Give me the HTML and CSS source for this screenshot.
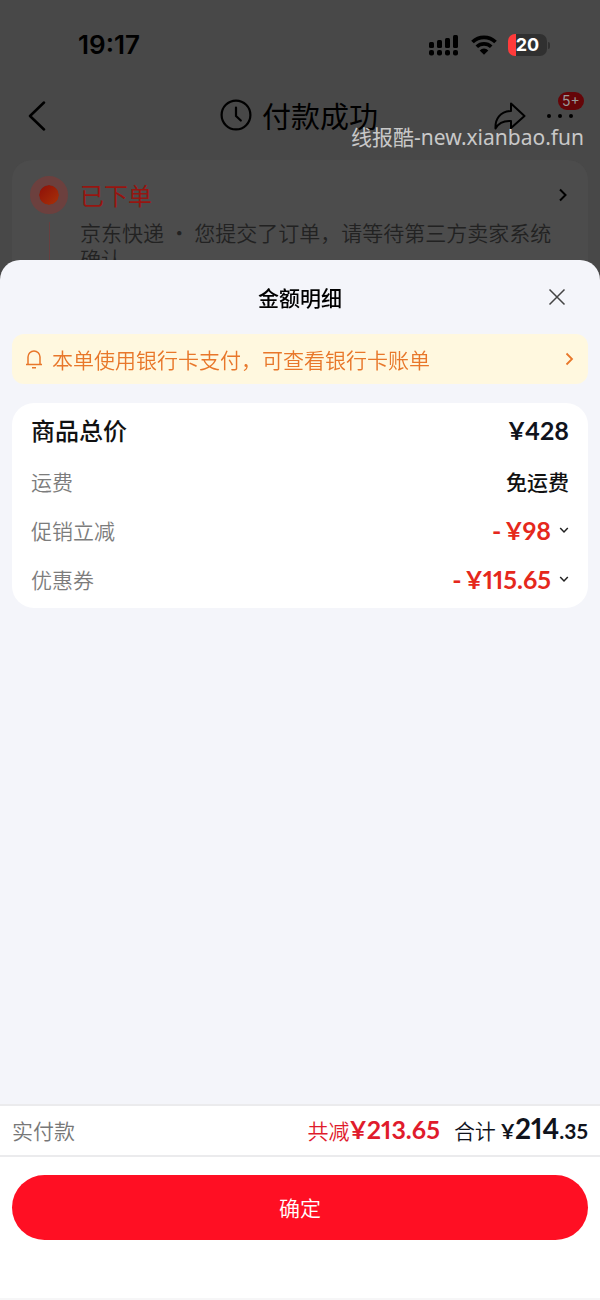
FILE: index.html
```html
<!DOCTYPE html>
<html lang="zh-CN">
<head>
<meta charset="utf-8">
<meta name="viewport" content="width=device-width, initial-scale=1">
<title>付款成功</title>
<link rel="stylesheet" href="styles.css">
</head>
<body>
<div class="page">
  <div class="status">
    <time class="status-time">19:17</time>
    <div class="status-icons">
      <svg width="32" height="22" viewBox="0 0 32 22" aria-hidden="true">
        <rect x="1" y="8" width="5" height="6" rx="1.500"/><rect x="9" y="6" width="5" height="8" rx="1.500"/><rect x="17" y="4" width="5" height="10" rx="1.500"/><rect x="25" y="1" width="5" height="13" rx="1.500"/>
        <rect x="1" y="16" width="5" height="5.500" rx="2"/><rect x="9" y="16" width="5" height="5.500" rx="2"/><rect x="17" y="16" width="5" height="5.500" rx="2"/><rect x="25" y="16" width="5" height="5.500" rx="2"/>
      </svg>
      <svg width="26" height="20" viewBox="0 0 26 20" aria-hidden="true">
        <path d="M1.500 7a16.500 16.500 0 0 1 23 0" fill="none" stroke="#000" stroke-width="3.800"/>
        <path d="M5.800 11.800a10.300 10.300 0 0 1 14.400 0" fill="none" stroke="#000" stroke-width="3.600"/>
        <path d="M13 19.800l-4.300-4.400a6 6 0 0 1 8.600 0z"/>
      </svg>
      <div class="battery"><span>20</span></div>
    </div>
  </div>
  <header class="nav">
    <button class="icon-btn" aria-label="返回"><svg width="18" height="30" viewBox="0 0 18 30"><path d="M16 1.500L2 15l14 13.500" fill="none" stroke="#000" stroke-width="2.500" stroke-linecap="round" stroke-linejoin="round"/></svg></button>
    <h1 class="nav-title">
      <svg width="32" height="32" viewBox="0 0 32 32" aria-hidden="true"><g fill="none" stroke="#000" stroke-width="2.200" stroke-linecap="round" stroke-linejoin="round"><circle cx="16" cy="16" r="14.400"/><path d="M16 8.500v8.500l4.800 4.500"/></g></svg>
      <span>付款成功</span>
    </h1>
    <div class="nav-actions">
      <button class="icon-btn" aria-label="分享"><svg width="32" height="28" viewBox="0 0 32 28"><path d="M17 1.500l13.500 12.500L17 26v-7C9.500 18.500 4.500 21 1.500 26.500 1 17 6 9.500 17 9z" fill="none" stroke="#000" stroke-width="2" stroke-linejoin="round"/></svg></button>
      <button class="icon-btn more" aria-label="更多"><svg width="28" height="6" viewBox="0 0 28 6"><circle cx="3" cy="3" r="2"/><circle cx="14" cy="3" r="2"/><circle cx="25" cy="3" r="2"/></svg><span class="badge">5+</span></button>
    </div>
  </header>
  <section class="order">
    <div class="rail"><span class="dot"></span><span class="line"></span></div>
    <div class="order-body">
      <h2 class="order-title">已下单
        <svg width="10" height="14" viewBox="0 0 10 14" aria-hidden="true"><path d="M2 1.500L7.500 7 2 12.500" fill="none" stroke="#000" stroke-width="2"/></svg>
      </h2>
      <p class="order-text">京东快递 · 您提交了订单，请等待第三方卖家系统确认</p>
    </div>
  </section>
  <div class="watermark">线报酷-new.xianbao.fun</div>
</div>

<main class="sheet" role="dialog" aria-labelledby="sheet-title">
  <header class="sheet-head">
    <h2 class="sheet-title" id="sheet-title">金额明细</h2>
    <button class="icon-btn" aria-label="关闭"><svg width="18" height="18" viewBox="0 0 18 18"><path d="M1.500 1.500l15 15M16.500 1.500l-15 15" stroke="#444" stroke-width="1.500"/></svg></button>
  </header>
  <a class="notice" href="#">
    <svg width="18" height="20" viewBox="0 0 18 20" aria-hidden="true"><path d="M1 15.500h16M3 15.500V8a6 6 0 0 1 12 0v7.500M7 18.700h4" fill="none" stroke="#e8772a" stroke-width="1.500"/></svg>
    <span class="notice-text">本单使用银行卡支付，可查看银行卡账单</span>
    <svg width="10" height="14" viewBox="0 0 10 14" aria-hidden="true"><path d="M2.500 1.500L8 7l-5.500 5.500" fill="none" stroke="#e8772a" stroke-width="1.800"/></svg>
  </a>
  <dl class="details">
    <div class="row row-total"><dt>商品总价</dt><dd class="money">¥428</dd></div>
    <div class="row"><dt>运费</dt><dd class="free">免运费</dd></div>
    <div class="row"><dt>促销立减</dt><dd><button class="money expand"><span>-</span><span>¥98</span><svg width="10" height="8" viewBox="0 0 10 8" aria-hidden="true"><path d="M1.200 2L5 6l3.800-4" fill="none" stroke="#222" stroke-width="1.500"/></svg></button></dd></div>
    <div class="row"><dt>优惠券</dt><dd><button class="money expand"><span>-</span><span>¥115.65</span><svg width="10" height="8" viewBox="0 0 10 8" aria-hidden="true"><path d="M1.200 2L5 6l3.800-4" fill="none" stroke="#222" stroke-width="1.500"/></svg></button></dd></div>
  </dl>
  <footer class="footer">
    <div class="summary">
      <span class="summary-label">实付款</span>
      <span class="saved">共减<b class="money">¥213.65</b></span>
      <span class="total">合计 <b class="money">¥<span class="big">214</span>.35</b></span>
    </div>
    <div class="confirm-wrap"><button class="confirm">确定</button></div>
  </footer>
</main>
</body>
</html>
```
FILE: styles.css
```css
* { box-sizing: border-box; }
body {
  margin: 0;
  height: 100vh;
  overflow: hidden;
  background: #484848;
  color: #000;
  font: 21px/26px "Noto Sans CJK SC", sans-serif;
}
h1, h2, p, dl, dd { margin: 0; font-weight: 400; }
button { font: inherit; color: inherit; border: 0; background: none; padding: 0; }
svg { display: block; flex: none; }
.icon-btn { display: flex; align-items: center; }

.page { position: relative; }
.status {
  display: flex;
  justify-content: space-between;
  align-items: center;
  padding: 32px 53px 0 78px;
}
.status-time { font: 600 26px/26px Inter, sans-serif; }
.status-icons { display: flex; align-items: center; gap: 11px; }
.battery {
  position: relative;
  width: 39px;
  height: 22px;
  border-radius: 7px;
  background: linear-gradient(to right, #ff3b3b 8px, #303030 8px);
  color: #fff;
  font: 700 18px/22px Inter, sans-serif;
  text-align: center;
}
.battery::after {
  content: "";
  position: absolute;
  left: 40px;
  top: 8px;
  width: 2px;
  height: 7px;
  border-radius: 0 2px 2px 0;
  background: #303030;
}
.nav {
  display: grid;
  grid-template-columns: 1fr auto 1fr;
  align-items: center;
  padding: 0 26px 0 28px;
  margin-top: 34px;
  height: 48px;
}
.nav-title {
  display: flex;
  align-items: center;
  gap: 10px;
  padding: 0 4px 2px 0;
  font-size: 29px;
  line-height: 40px;
}
.nav-actions { display: flex; justify-content: flex-end; align-items: center; gap: 20px; }
.more { position: relative; }
.badge {
  position: absolute;
  left: 12px;
  bottom: 9px;
  padding: 0 4px;
  border-radius: 10px;
  background: #650508;
  color: #999;
  font: 14px/18px Inter, sans-serif;
}
.order {
  display: flex;
  gap: 12px;
  margin: 20px 12px 0;
  padding: 16px 20px 30px 18px;
  border-radius: 20px;
  background: #4c4c4c;
}
.rail { display: flex; flex-direction: column; align-items: center; gap: 8px; }
.dot {
  width: 38px;
  height: 38px;
  border: 9px solid #6c403e;
  border-radius: 50%;
  background: linear-gradient(135deg, #8e0f08, #a83208) padding-box;
}
.line { flex: 1; width: 1px; background: #673f3f; }
.order-body { flex: 1; }
.order-title {
  display: flex;
  justify-content: space-between;
  align-items: center;
  color: #961510;
  font-size: 24px;
  line-height: 38px;
}
.order-text { margin-top: 5px; color: #222; font-weight: 350; }
.watermark {
  position: absolute;
  right: 16px;
  top: 123px;
  color: #c8c8c8;
  font: 21px/28px "Noto Sans", "Noto Sans CJK SC", sans-serif;
}

.sheet {
  position: fixed;
  inset: 20vh 0 0;
  display: flex;
  flex-direction: column;
  overflow: hidden;
  border-radius: 20px 20px 0 0;
  background: #f4f5fa;
}
.sheet-head {
  display: grid;
  grid-template-columns: 1fr auto 1fr;
  align-items: center;
  padding: 0 34px;
  height: 74px;
}
.sheet-title { grid-column: 2; font-size: 21px; font-weight: 500; }
.sheet-head .icon-btn { justify-self: end; }
.notice {
  display: flex;
  align-items: center;
  gap: 9px;
  margin: 0 12px;
  padding: 12px 14px 12px 13px;
  border-radius: 12px;
  background: #fff8df;
  color: #e8772a;
  font-weight: 350;
  text-decoration: none;
}
.notice-text { flex: 1; }
.details {
  margin: 19px 12px 0;
  padding: 0 19px 5px;
  border-radius: 22px;
  background: #fff;
}
.row {
  display: flex;
  justify-content: space-between;
  align-items: center;
  min-height: 49px;
  color: #7c7c7c;
  font-weight: 350;
}
.row-total { min-height: 53px; color: #111; font-size: 24px; font-weight: 500; }
.money {
  font-family: Lato, "Noto Sans CJK SC", sans-serif;
  font-size: 25px;
  font-weight: 700;
  font-variant-numeric: proportional-nums;
}
.row .money { color: #10131c; }
.row .expand { display: flex; align-items: center; gap: 4px; color: #e5281c; }
.expand svg { margin-left: 4px; }
.free { color: #111; font-weight: 500; }
.footer { margin-top: auto; background: #fff; border-top: 2px solid #ebebed; }
.summary {
  display: flex;
  align-items: baseline;
  gap: 14px;
  padding: 9px 12px 11px;
  border-bottom: 2px solid #ebebed;
  font-weight: 350;
}
.summary-label { margin-right: auto; color: #777; }
.saved { color: #e01b2c; }
.total { color: #10131c; }
.total .money { font-size: 21px; }
.total .big { font-size: 28px; }
.confirm-wrap { padding: 18px 12px 58px; border-bottom: 2px solid #f6f6f7; }
.confirm {
  display: block;
  width: 100%;
  padding: 19px 0 20px;
  border-radius: 33px;
  background: #ff0f23;
  color: #fff;
  font-weight: 350;
}
```
